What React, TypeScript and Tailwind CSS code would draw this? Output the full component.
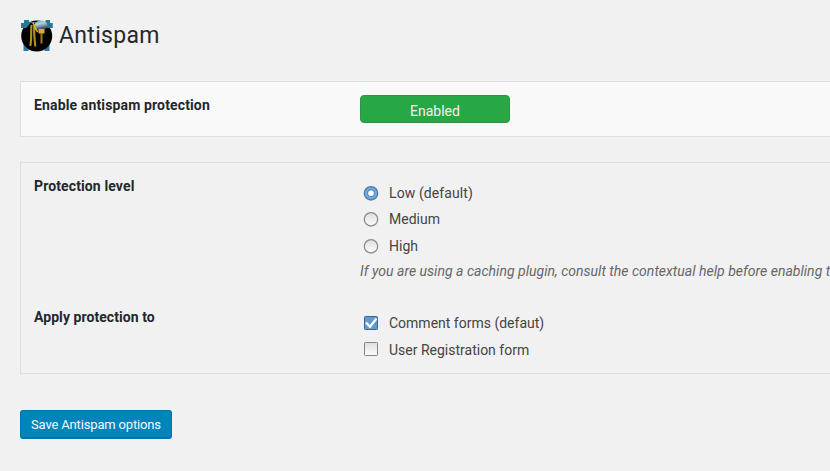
import type { ReactNode } from "react";

function Logo() {
  return (
    <svg width="34" height="34" viewBox="0 0 34 34" className="shrink-0" aria-hidden="true">
      <defs>
        <linearGradient id="orb" x1="0" y1="0" x2="0.3" y2="1">
          <stop offset="0" stopColor="#5f9fbe" />
          <stop offset="0.4" stopColor="#b9d0dc" />
          <stop offset="1" stopColor="#1d3d4a" />
        </linearGradient>
      </defs>
      <path d="M4 2h4.500v2H28V2h4.500v0h-2.500v3h2.500v5h-3v23h-5v-4H8.500v4h-5V10H1V5h3z" fill="#2a7ca3" />
      <circle cx="16.700" cy="18" r="15.500" fill="#030303" />
      <path d="M1 10V5h3V2h4.500l1 2H25l1-2h4v3h2.500v5h-5l-2-2H11l-3 2z" fill="#277795" />
      <path d="M6 10.500l4.500-5.500h5l5 8 8-3v8H5z" fill="#030303" />
      <ellipse cx="21" cy="7.500" rx="6.600" ry="4.900" fill="url(#orb)" />
      <path d="M11.500 7c-.8 8 .3 14-1.200 21M14.500 6.500c-1 8 .3 15 .8 22" fill="none" stroke="#b4911c" strokeWidth="2.100" />
      <path d="M12.800 4.500c2 3 1.700 6 5 9.500" fill="none" stroke="#dcb927" strokeWidth="1.500" />
      <path d="M18.500 11h6v4.500h-6z" fill="#d9ad2c" />
      <path d="M21.500 15v10.500" fill="none" stroke="#9c7c1c" strokeWidth="2" />
    </svg>
  );
}

function Radio({ checked = false }: { checked?: boolean }) {
  return (
    <svg width="16" height="16" viewBox="0 0 16 16" className="shrink-0" role="radio" aria-checked={checked}>
      <defs>
        <linearGradient id="radio-off" x1="0" y1="0" x2="0" y2="1">
          <stop stopColor="#dedede" />
          <stop offset="1" stopColor="#fcfcfc" />
        </linearGradient>
      </defs>
      <circle cx="8" cy="8.300" r="6.700" fill={checked ? "#78a9da" : "url(#radio-off)"} stroke={checked ? "#4a7cae" : "#8c8c8c"} strokeWidth="1.300" />
      {checked && <circle cx="8" cy="8.300" r="4" fill="#5a8fc6" />}
      {checked && <circle cx="8" cy="8.300" r="2.800" fill="#fff" />}
    </svg>
  );
}

function Checkbox({ checked = false }: { checked?: boolean }) {
  return (
    <svg width="16" height="16" viewBox="0 0 16 16" className="shrink-0" role="checkbox" aria-checked={checked}>
      <defs>
        <linearGradient id="box-off" x1="0" y1="0" x2="0" y2="1">
          <stop stopColor="#dedede" />
          <stop offset="1" stopColor="#fcfcfc" />
        </linearGradient>
      </defs>
      <rect x="1.500" y="1.500" width="13" height="13" rx="0.800" fill={checked ? "#6498ce" : "url(#box-off)"} stroke={checked ? "#37689c" : "#858585"} />
      {checked && <path d="M3 7.500l4 4.200 6.500-8.200" fill="none" stroke="#fff" strokeWidth="2.300" />}
    </svg>
  );
}

function Option({ control, children, className }: { control: ReactNode; children: ReactNode; className: string }) {
  return (
    <div className={`flex items-center gap-[10px] pl-[3px] text-sm leading-5 text-[#444] ${className}`}>
      {control}
      <span>{children}</span>
    </div>
  );
}

export default function App() {
  return (
    <main className="h-[471px] overflow-hidden bg-[#f1f1f1] pl-5 font-['Roboto',sans-serif] text-[#23282d]">
      <header className="flex h-[81px] items-start pt-[18px]">
        <Logo />
        <h1 className="mt-px ml-[5px] text-[23px] leading-[34px] tracking-[0.3px]">Antispam</h1>
      </header>

      <section className="flex h-14 border-y border-l border-[#dedede] bg-[#f9f9f9] pt-[13px] pl-[13px]">
        <h2 className="w-[326px] shrink-0 text-sm leading-5 font-bold tracking-[0.14px]">Enable antispam protection</h2>
        <button className="h-7 w-[150px] rounded border border-[#349048] bg-[#28a745] pt-1 text-sm leading-5 text-[#f2f2f2]">Enabled</button>
      </section>

      <section className="mt-[25px] h-[212px] border-y border-l border-[#dedede] pl-[13px]">
        <div className="flex h-[131px] pt-[13px]">
          <h2 className="w-[326px] shrink-0 text-sm leading-5 font-bold tracking-[0.12px]">Protection level</h2>
          <div className="pt-[7px] whitespace-nowrap">
            <Option className="h-5 tracking-[0.1px]" control={<Radio checked />}>Low (default)</Option>
            <Option className="mt-[6px] h-5" control={<Radio />}>Medium</Option>
            <Option className="mt-[7px] h-5" control={<Radio />}>High</Option>
            <p className="mt-[5px] text-sm leading-5 tracking-[0.02px] text-[#666] italic">If you are using a caching plugin, consult the contextual help before enabling this option</p>
          </div>
        </div>
        <div className="flex pt-[13px]">
          <h2 className="w-[326px] shrink-0 text-sm leading-5 font-bold tracking-[0.06px]">Apply protection to</h2>
          <div className="pt-[6px] whitespace-nowrap">
            <Option className="h-5" control={<Checkbox checked />}>Comment forms (defaut)</Option>
            <Option className="mt-[6px] h-5" control={<Checkbox />}><span className="relative top-px">User Registration form</span></Option>
          </div>
        </div>
      </section>

      <button className="mt-9 h-[29px] w-[152px] rounded-[3px] border border-b-2 border-[#0073aa] bg-[#0085ba] pt-px text-[13px] leading-[25px] tracking-[-0.16px] whitespace-nowrap text-[#f4fafd]">Save Antispam options</button>
    </main>
  );
}
